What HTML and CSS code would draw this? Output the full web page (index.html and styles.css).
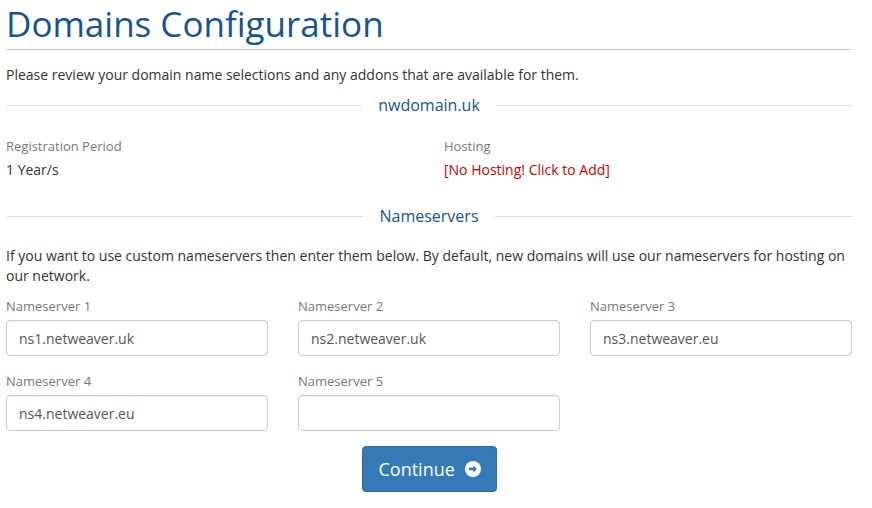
FILE: index.html
```html
<!DOCTYPE html>
<html lang="en">
<head>
<meta charset="utf-8">
<title>Domains Configuration</title>
<link rel="stylesheet" href="styles.css">
</head>
<body>
<div class="page">
  <h1 class="title">Domains Configuration</h1>
  <p class="intro">Please review your domain name selections and any addons that are available for them.</p>

  <div class="divider divider-domain"><span>nwdomain.uk</span></div>

  <div class="info-row">
    <div class="info-col">
      <div class="info-label">Registration Period</div>
      <div class="info-value">1 Year/s</div>
    </div>
    <div class="info-col">
      <div class="info-label">Hosting</div>
      <div class="info-value"><a class="hosting-link" href="#">[No Hosting! Click to Add]</a></div>
    </div>
  </div>

  <div class="divider divider-ns"><span>Nameservers</span></div>

  <p class="ns-intro">If you want to use custom nameservers then enter them below. By default, new domains will use our nameservers for hosting on our network.</p>

  <div class="ns-grid">
    <div class="field">
      <label class="field-label">Nameserver 1</label>
      <input class="field-input" type="text" value="ns1.netweaver.uk">
    </div>
    <div class="field">
      <label class="field-label">Nameserver 2</label>
      <input class="field-input" type="text" value="ns2.netweaver.uk">
    </div>
    <div class="field">
      <label class="field-label">Nameserver 3</label>
      <input class="field-input" type="text" value="ns3.netweaver.eu">
    </div>
    <div class="field">
      <label class="field-label">Nameserver 4</label>
      <input class="field-input" type="text" value="ns4.netweaver.eu">
    </div>
    <div class="field">
      <label class="field-label">Nameserver 5</label>
      <input class="field-input" type="text" value="">
    </div>
  </div>

  <div class="actions">
    <button class="btn-continue" type="button">Continue
      <svg class="btn-icon" viewBox="0 0 16 16" width="16" height="16" aria-hidden="true">
        <circle cx="8" cy="8" r="8" fill="#fff"/>
        <path d="M4 6.8h4.2V4.4L12 8l-3.8 3.6V9.2H4z" fill="#337ab7"/>
      </svg>
    </button>
  </div>
</div>
</body>
</html>
```

FILE: styles.css
```css
html, body {
  margin: 0;
  padding: 0;
  background: #fff;
}

body {
  font-family: "Open Sans", "Liberation Sans", sans-serif;
  font-size: 14px;
  line-height: 20px;
  color: #333;
}

.page {
  width: 846px;
  padding: 0 0 0 6px;
}

.title {
  margin: 0;
  padding: 3px 0 4px;
  font-family: "Open Sans", "Liberation Sans", sans-serif;
  font-weight: 400;
  font-size: 35px;
  line-height: 42px;
  color: #14558f;
  border-bottom: 1px solid #cccccc;
}

.intro {
  margin: 15px 0 0;
  height: 20px;
}

.divider {
  display: flex;
  align-items: center;
  gap: 16px;
  font-size: 16px;
  line-height: 22px;
  color: #14558f;
}

.divider::before,
.divider::after {
  content: "";
  flex: 1;
  border-top: 1px solid #dddddd;
}

.divider-domain {
  margin-top: 9px;
}

.divider-ns {
  margin-top: 25px;
}

.info-row {
  display: grid;
  grid-template-columns: 408px 408px;
  column-gap: 30px;
  margin-top: 21px;
}

.info-label {
  font-size: 13px;
  line-height: 18px;
  color: #777;
}

.info-value {
  margin-top: 5px;
  line-height: 20px;
}

.hosting-link {
  color: #cc0000;
  text-decoration: none;
}

.ns-intro {
  margin: 19px 0 0;
}

.ns-grid {
  display: grid;
  grid-template-columns: repeat(3, 262px);
  column-gap: 30px;
  row-gap: 16px;
  margin-top: 11px;
}

.field {
  display: flex;
  flex-direction: column;
  gap: 5px;
}

.field-label {
  font-size: 13px;
  line-height: 18px;
  color: #777;
}

.field-input {
  box-sizing: border-box;
  width: 262px;
  height: 36px;
  margin: 0;
  padding: 0 12px;
  font-family: "Open Sans", "Liberation Sans", sans-serif;
  font-size: 14px;
  color: #555;
  background: #fff;
  border: 1px solid #cccccc;
  border-radius: 4px;
  box-shadow: inset 0 1px 1px rgba(0,0,0,0.06);
  outline: none;
}

.actions {
  display: flex;
  justify-content: center;
  margin-top: 15px;
}

.btn-continue {
  display: inline-flex;
  align-items: center;
  gap: 10px;
  box-sizing: border-box;
  width: 135px;
  height: 46px;
  padding: 0 16px;
  font-family: "Open Sans", "Liberation Sans", sans-serif;
  font-size: 18px;
  color: #fff;
  background: #337ab7;
  border: 1px solid #2e6da4;
  border-radius: 4px;
  cursor: pointer;
}

.btn-icon {
  display: block;
  flex: none;
}
```
